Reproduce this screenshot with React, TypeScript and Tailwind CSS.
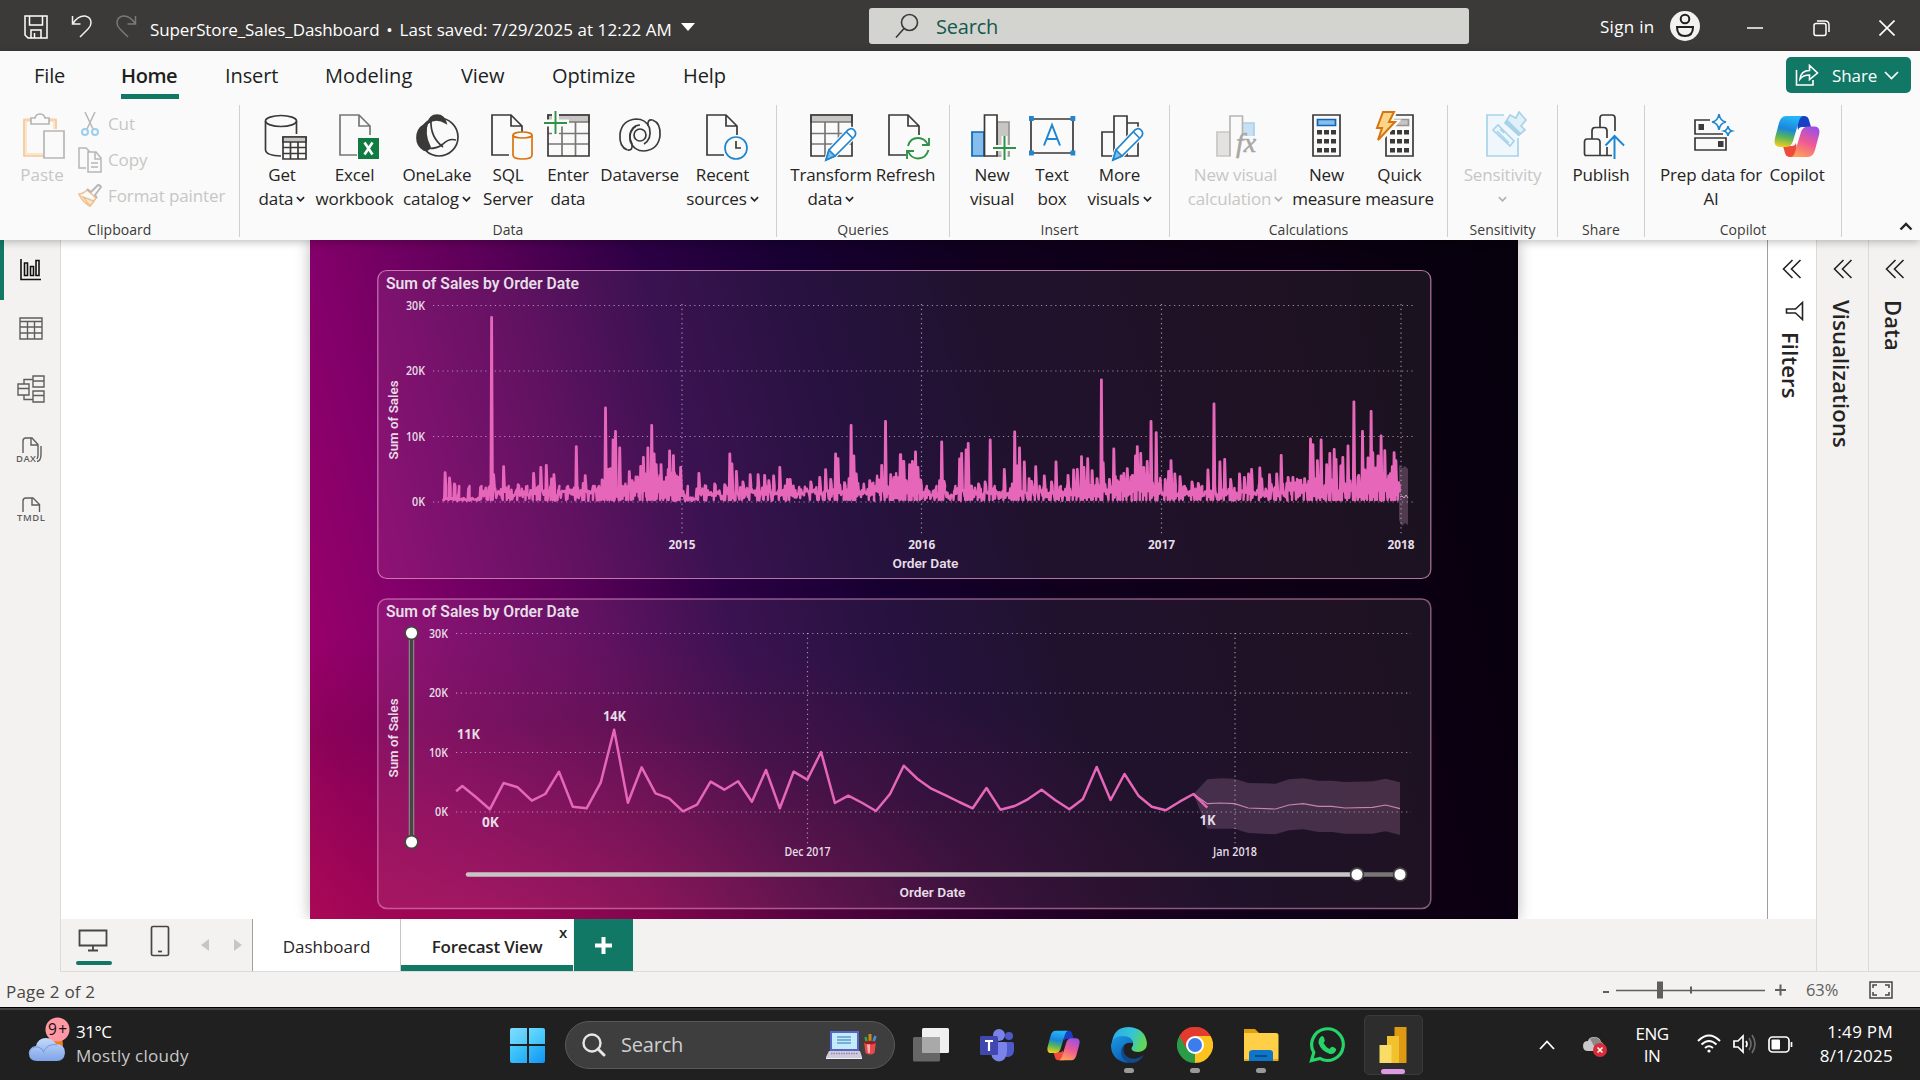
import React from "react";

type Pt = [number, number];

const INK = "#3b3a39";
const BLUE = "#1f86d0";

/* ---------- shared bits ---------- */

function Chevron({ color = "#252423", w = 9, className = "ml-[4px]" }: { color?: string; w?: number; className?: string }) {
  return (
    <svg width={w} height={w * 0.7} viewBox="0 0 10 7" fill="none" stroke={color} strokeWidth="1.8" className={"inline-block " + className}>
      <path d="M1 1.2 5 5.4 9 1.2" />
    </svg>
  );
}

function Icon({ children, className = "" }: { children: React.ReactNode; className?: string }) {
  return (
    <svg width="50" height="52" viewBox="0 0 50 52" fill="none" stroke={INK} strokeWidth="1.7" className={"shrink-0 " + className}>
      {children}
    </svg>
  );
}

function Doc({ x = 8 }: { x?: number }) {
  return <path transform={`translate(${x} 4)`} d="M18 41H1V1H20L31 12V21M20 1V12H31" />;
}

function Pencil() {
  return (
    <g stroke={BLUE}>
      <path d="M19 50 22 40 41 20Q45 17 47.500 20.500Q50 24 47 27L28 46Z" fill="#fff" stroke="#fafafa" strokeWidth="4" />
      <path d="M19 50 22 40 41 20Q45 17 47.500 20.500Q50 24 47 27L28 46Z" fill="#fff" />
      <path d="M19 50 22 40 28 46Z" fill="#83beec" />
      <path d="M39.500 22 45.500 28" />
    </g>
  );
}

function Grid({ head = "#c8c6c4" }: { head?: string }) {
  return (
    <g>
      <path d="M4 5H45V12H4Z" fill={head} stroke="#797775" />
      <path d="M4 23.500H45M4 34H45M18 12V46M31.500 12V46" stroke="#797775" />
      <path d="M4 5H45V46H4Z" />
    </g>
  );
}

function Calculator({ screen, edge }: { screen: string; edge: string }) {
  return (
    <g>
      <path d="M11 5H38V46H11Z" />
      <path d="M15.500 9.500H33.500V15.500H15.500Z" fill={screen} stroke={edge} />
      {[20, 29, 38].map((y) => [15, 22, 29].map((x) => <rect key={`${x}-${y}`} x={x} y={y} width="5" height="4.500" fill={INK} stroke="none" />))}
    </g>
  );
}

function CopilotMark({ id, w, h }: { id: string; w: number; h: number }) {
  return (
    <svg width={w} height={h} viewBox="0 0 46 41" className="shrink-0">
      <defs>
        <linearGradient id={id + "a"} x1="0.400" y1="0" x2="0.200" y2="1">
          <stop offset="0" stopColor="#25b4f5" />
          <stop offset="0.400" stopColor="#1a86dc" />
          <stop offset="0.650" stopColor="#53b35c" />
          <stop offset="1" stopColor="#f6cf1b" />
        </linearGradient>
        <linearGradient id={id + "b"} x1="0.700" y1="0" x2="0.300" y2="1">
          <stop offset="0" stopColor="#9c50e8" />
          <stop offset="0.500" stopColor="#ee5a92" />
          <stop offset="1" stopColor="#ffa05a" />
        </linearGradient>
      </defs>
      <path d="M22 0H30Q34 0 35 4L37 11H28Q25 11 24 14Z" fill="#1741c4" />
      <path d="M24 41H16Q12 41 11 37L9 30H18Q21 30 22 27Z" fill="#f04a3a" />
      <path d="M12 0H29Q26 1 25 5L19 25Q17 31 12 31H6Q-1 31 1 22L5 7Q7 0 12 0Z" fill={`url(#${id}a)`} />
      <path d="M34 41H17Q20 40 21 36L27 16Q29 10.500 34 10.500H40Q47 10.500 45 19L41 34Q39 41 34 41Z" fill={`url(#${id}b)`} />
    </svg>
  );
}

/* ---------- title bar ---------- */

function TitleBar() {
  return (
    <header className="flex h-[51px] shrink-0 items-center bg-[#3b3a38] text-white">
      <div className="flex w-[869px] items-center">
        <svg width="24" height="24" viewBox="0 0 24 24" fill="none" stroke="#fff" strokeWidth="1.500" className="ml-[24px] mt-[2px]">
          <path d="M1 1H23V23H4L1 20ZM5.500 1V10H18.500V1M7 23V15H17V23M10.500 18V23" />
        </svg>
        <svg width="22" height="24" viewBox="0 0 22 24" fill="none" stroke="#f3f2f1" strokeWidth="1.500" className="ml-[23px]">
          <path d="M1.500 2V10H9.500M2 9.500Q7 1.500 14 2Q20 3 20 9Q20 12 17 15L9 23" />
        </svg>
        <svg width="22" height="24" viewBox="0 0 22 24" fill="none" stroke="#7b7977" strokeWidth="1.500" className="ml-[22px]">
          <path d="M20.500 2V10H12.500M20 9.500Q15 1.500 8 2Q2 3 2 9Q2 12 5 15L13 23" />
        </svg>
        <div className="ml-[13px] mt-[8px] flex whitespace-nowrap text-[17px] leading-[24px]">
          <span className="tracking-[-0.1px]">SuperStore_Sales_Dashboard</span>
          <span className="w-[20px] text-center">•</span>
          <span className="tracking-[0.06px]">Last saved: 7/29/2025 at 12:22 AM</span>
        </div>
        <svg width="14" height="8" viewBox="0 0 14 8" className="ml-[9px] mt-[3px]"><path d="M0 0H14L7 8Z" fill="#fff" /></svg>
      </div>
      <div className="flex h-[36px] w-[600px] items-center rounded-[3px] bg-[#d3d3d0]">
        <svg width="24" height="26" viewBox="0 0 24 26" fill="none" stroke="#3b3a39" strokeWidth="1.600" className="ml-[26px]">
          <circle cx="14.500" cy="9.500" r="8" /><path d="M9 15.500 1 24.500" />
        </svg>
        <span className="ml-[17px] mt-[2px] text-[20px] tracking-[-0.2px] text-[#14594c]">Search</span>
      </div>
      <span className="ml-[131px] mt-[2px] text-[17px] tracking-[0.3px]">Sign in</span>
      <svg width="30" height="30" viewBox="0 0 30 30" className="ml-[15px]" fill="none" stroke="#201f1e" strokeWidth="2">
        <circle cx="15" cy="15" r="15" fill="#f3f2f1" stroke="none" />
        <circle cx="15" cy="8" r="4.300" /><path d="M7 16H23Q23 25 15 25Q7 25 7 16Z" />
      </svg>
      <svg width="16" height="16" viewBox="0 0 16 16" className="ml-[47px] mt-1" stroke="#fff" strokeWidth="1.500"><path d="M0 8H16" /></svg>
      <svg width="17" height="17" viewBox="0 0 17 17" className="ml-[50px] mt-[5px]" fill="none" stroke="#fff" strokeWidth="1.500">
        <rect x="1" y="3.500" width="12" height="12" rx="2" /><path d="M4 1H12Q16 1 16 5V12" />
      </svg>
      <svg width="16" height="16" viewBox="0 0 16 16" className="ml-[49px] mt-1" stroke="#fff" strokeWidth="1.600"><path d="M0.500 0.500 15.500 15.500M15.500 0.500 0.500 15.500" /></svg>
    </header>
  );
}

/* ---------- ribbon ---------- */

function MenuBar() {
  return (
    <nav className="flex h-[48px] items-center text-[20px] tracking-[-0.1px] text-[#201f1e]">
      <span className="ml-[34px] mt-[2px] w-[87px]">File</span>
      <span className="relative mt-[2px] w-[104px] font-semibold tracking-[-0.4px]">
        Home
        <i className="absolute -bottom-[8px] left-0 h-[5px] w-[58px] bg-[#117865]" />
      </span>
      <span className="mt-[2px] w-[100px]">Insert</span>
      <span className="mt-[2px] w-[136px] tracking-[0.08px]">Modeling</span>
      <span className="mt-[2px] w-[91px]">View</span>
      <span className="mt-[2px] w-[131px]">Optimize</span>
      <span className="mt-[2px]">Help</span>
      <div className="ml-auto mr-[9px] flex h-[36px] w-[125px] items-center rounded-[5px] bg-[#117865] text-white">
        <svg width="24" height="22" viewBox="0 0 24 22" fill="none" stroke="#fff" strokeWidth="1.600" className="ml-[9px]">
          <path d="M1.500 6V21H18V16M5 15Q6 6.500 14.500 6.500V1.500L22.500 9 14.500 15.500V11Q8 11 5 15Z" />
        </svg>
        <span className="ml-[13px] mt-px text-[17px]">Share</span>
        <svg width="15" height="9" viewBox="0 0 15 9" fill="none" stroke="#fff" strokeWidth="1.700" className="ml-[7px]"><path d="M1 1 7.500 7.500 14 1" /></svg>
      </div>
    </nav>
  );
}

function Group({ label, width, children }: { label: string; width: string; children: React.ReactNode }) {
  return (
    <section className={"flex h-[132px] shrink-0 flex-col border-r border-[#d2d0ce] " + width}>
      <div className="flex h-[114px] shrink-0">{children}</div>
      <div className="-mt-[1px] text-center text-[14px] leading-[24px] tracking-[0.05px] text-[#3b3a39]">{label}</div>
    </section>
  );
}

function Tool({ width, icon, lines, menu, off }: { width: string; icon: React.ReactNode; lines: string[]; menu?: boolean; off?: boolean }) {
  return (
    <div className={"flex shrink-0 flex-col items-center pt-[5px] " + width + (off ? " text-[#c8c6c4]" : " text-[#252423]")}>
      {icon}
      <div className="mt-[1px] flex flex-col items-center whitespace-nowrap text-[17px] leading-[24px] tracking-[-0.15px]">
        {lines.map((l, i) => (
          <span key={i} className="flex items-center">
            {l}
            {menu && i === lines.length - 1 ? <Chevron color={off ? "#b3b0ad" : "#252423"} className="ml-[3px]" /> : null}
          </span>
        ))}
      </div>
    </div>
  );
}

function Ribbon() {
  return (
    <div className="flex pt-[6px]">
      <Group label="Clipboard" width="w-[240px]">
        <div className="flex w-[78px] flex-col items-center pl-[6px] pt-[5px] text-[17px] text-[#c8c6c4]">
          <Icon className="ml-[4px]">
            <path d="M12 10H6V45H25M30 10H36V19" stroke="#fbe6cc" strokeWidth="4" />
            <path d="M12 10H5V46H25M30 10H37V19" stroke="#eec08e" strokeWidth="1.200" />
            <path d="M12 14V8H16Q17 4 21 4Q25 4 26 8H30V14Z" stroke="#b8b6b4" fill="#fafafa" />
            <path d="M25 21H45V48H25Z" stroke="#b8b6b4" fill="#fafafa" />
          </Icon>
          <span className="mt-[1px] leading-[24px]">Paste</span>
        </div>
        <div className="flex flex-col text-[17px] tracking-[-0.1px] text-[#c8c6c4]">
          <div className="mt-[1px] flex h-[36px] items-center">
            <svg width="24" height="26" viewBox="0 0 24 26" fill="none" strokeWidth="1.500">
              <path d="M7 1 15 18M17 1 9 18" stroke="#b8b6b4" />
              <circle cx="7" cy="21" r="3" stroke="#9fcdec" strokeWidth="2" /><circle cx="17" cy="21" r="3" stroke="#9fcdec" strokeWidth="2" />
            </svg>
            <span className="ml-[6px]">Cut</span>
          </div>
          <div className="flex h-[36px] items-center">
            <svg width="24" height="26" viewBox="0 0 24 26" fill="none" stroke="#b8b6b4" strokeWidth="1.500">
              <path d="M8 21H1V1H8L12 5M10 5H18L23 11V25H10ZM17 5V12H23M13 16H20M13 20H20" />
            </svg>
            <span className="ml-[6px]">Copy</span>
          </div>
          <div className="flex h-[36px] items-center">
            <svg width="24" height="26" viewBox="0 0 24 26" fill="none" strokeWidth="1.500">
              <path d="M9 7 18 15 12 23Q5 20 1 11Q5 11 9 7Z" stroke="#eec08e" />
              <path d="M5 14 16 18 12 23Z" stroke="#eec08e" fill="#fbe6cc" />
              <path d="M9 6 13 9 20 2Q22 2 23 4L17 12 19 15" stroke="#b8b6b4" strokeWidth="1.800" />
            </svg>
            <span className="ml-[6px]">Format painter</span>
          </div>
        </div>
      </Group>

      <Group label="Data" width="w-[537px] [&>div:first-child]:pl-[6px]">
        <Tool width="w-[72px]" lines={["Get", "data"]} menu icon={
          <Icon>
            <ellipse cx="24" cy="11" rx="15.500" ry="5.500" /><path d="M8.500 11V40Q9 45.500 24 46M39.500 11V24" />
            <path d="M26 27H49V49H26Z" fill="#fafafa" /><path d="M26 27H49V32H26Z" fill="#c8c6c4" /><path d="M26 37.500H49M26 43.500H49M33.500 32V49M41 32V49" />
          </Icon>} />
        <Tool width="w-[73px]" lines={["Excel", "workbook"]} icon={
          <Icon>
            <g stroke="#797775"><Doc x={9} /></g>
            <rect x="28" y="28" width="21" height="21" fill="#107c41" stroke="none" /><path d="M34.500 32.500 42.500 44.500M42.500 32.500 34.500 44.500" stroke="#fff" strokeWidth="2.600" />
          </Icon>} />
        <Tool width="w-[92px]" lines={["OneLake", "catalog"]} menu icon={
          <Icon>
            <circle cx="27" cy="27" r="19" />
            <path d="M16 13Q18 5 25 5Q32 5 34 13Q24 7 16 13Z" fill={INK} />
            <path d="M12 15Q5 19 5 28Q5 36 12 40Q16 41 18 37Q11 24 16 11Z" fill={INK} />
            <path d="M19 10Q18 27 31 37M11 38Q24 40 31 34Q37 28 44 30" />
          </Icon>} />
        <Tool width="w-[50px]" lines={["SQL", "Server"]} icon={
          <Icon className="ml-[2px]">
            <Doc x={7} />
            <g stroke="#d9730d"><path d="M29 25V45Q29 49 38.500 49Q48 49 48 45V25" fill="#fafafa" /><ellipse cx="38.500" cy="25" rx="9.500" ry="3" fill="#fafafa" /></g>
          </Icon>} />
        <Tool width="w-[70px]" lines={["Enter", "data"]} icon={
          <Icon className="ml-[2px]"><Grid /><path d="M0 13H25M11.500 0V25" stroke="#fafafa" strokeWidth="7" /><path d="M0 13H23M11.500 1V24" stroke="#2f9347" strokeWidth="1.900" /></Icon>} />
        <Tool width="w-[73px]" lines={["Dataverse"]} icon={
          <Icon>
            <path d="M12.500 40Q4 37 5 24Q7 10 21 9Q31 9 34.500 18Q37 29 29 34" />
            <path d="M12.500 40Q18 41 17 34Q12 25 18 18Q21 15 25 15" />
            <g transform="rotate(180 25 25)">
              <path d="M12.500 40Q4 37 5 24Q7 10 21 9Q31 9 34.500 18Q37 29 29 34" />
              <path d="M12.500 40Q18 41 17 34" />
            </g>
            <circle cx="25" cy="25" r="6" />
          </Icon>} />
        <Tool width="w-[93px]" lines={["Recent", "sources"]} menu icon={
          <Icon><Doc x={8} /><circle cx="38" cy="38" r="11" stroke={BLUE} fill="#fafafa" /><path d="M38 31V38H43" /></Icon>} />
      </Group>

      <Group label="Queries" width="w-[173px] [&>div:first-child]:pl-[10px]">
        <Tool width="w-[88px]" lines={["Transform", "data"]} menu icon={<Icon className="ml-[2px]"><Grid /><Pencil /></Icon>} />
        <Tool width="w-[61px]" lines={["Refresh"]} icon={
          <Icon><Doc x={7} /><circle cx="37" cy="38" r="13" fill="#fafafa" stroke="none" />
            <path d="M27 36Q29 28 37 28Q44 28 47 35M48 28V35H41M47.500 40Q45 48.500 37 48.500Q30 48.500 27 41M26 49V41H33" stroke="#2f9347" strokeWidth="1.900" />
          </Icon>} />
      </Group>

      <Group label="Insert" width="w-[220px] [&>div:first-child]:pl-[12px]">
        <Tool width="w-[60px]" lines={["New", "visual"]} icon={
          <Icon>
            <path d="M5 22H17V46H5Z" fill="#83beec" stroke="#1464b4" /><path d="M30 12H42V46H30Z" fill="#c8c6c4" stroke="#979593" />
            <path d="M17.500 5H30V46H17.500Z" fill="#fff" /><path d="M26 38H48M37.500 26V51" stroke="#fafafa" strokeWidth="6" /><path d="M26 38H49M37.500 26V50" stroke="#2f9347" strokeWidth="2" />
          </Icon>} />
        <Tool width="w-[60px]" lines={["Text", "box"]} icon={
          <Icon><path d="M4 9H46V43H4Z" /><path d="M17 35.500 25 15 33 35.500M19.500 29H30.500" stroke={BLUE} strokeWidth="2" />
            {[[2, 6], [43.500, 6], [2, 40.500], [43.500, 40.500]].map(([x, y]) => <rect key={`${x}${y}`} x={x} y={y} width="4.800" height="5" fill={BLUE} stroke="none" />)}
          </Icon>} />
        <Tool width="w-[75px]" lines={["More", "visuals"]} menu icon={
          <Icon className="-ml-[2px]"><path d="M8 22H20V46H8ZM20 6H33V46H20ZM33 13H44V46H33Z" /><Pencil /></Icon>} />
      </Group>

      <Group label="Calculations" width="w-[278px] [&>div:first-child]:pl-[11px]">
        <Tool width="w-[109px]" off lines={["New visual", "calculation"]} menu icon={
          <Icon>
            <path d="M6 22H19V46H6Z" fill="#e4e2e1" stroke="#c8c6c4" /><path d="M31 13H43V30H31Z" fill="#c7e0f4" stroke="#a9d0ec" />
            <path d="M19 46V6H31.500V46" fill="#fafafa" stroke="#b8b6b4" />
            <path d="M24 26H48V50H24Z" fill="#fafafa" stroke="none" />
            <text x="25" y="42" fontFamily="Liberation Serif" fontStyle="italic" fontSize="28" fill="#a8a6a4" stroke="#a8a6a4" strokeWidth="0.500">fx</text>
          </Icon>} />
        <Tool width="w-[73px]" lines={["New", "measure"]} icon={<Icon><Calculator screen="#83beec" edge="#1464b4" /></Icon>} />
        <Tool width="w-[73px]" lines={["Quick", "measure"]} icon={
          <Icon>
            <Calculator screen="#c8c6c4" edge="#979593" />
            <path d="M8 1H20L15 12H21L4 31 8 18H2Z" stroke="#fafafa" strokeWidth="5" /><path d="M8 2H19L14 12H20L3 30 7 18H2Z" fill="#fbd68a" stroke="#d9730d" strokeWidth="2" />
          </Icon>} />
      </Group>

      <Group label="Sensitivity" width="w-[110px]">
        <div className="flex w-[109px] flex-col items-center">
          <Tool width="w-[109px]" off lines={["Sensitivity"]} icon={
            <Icon>
              <g stroke="#a6d3ea"><path d="M26 5H9V46H40V28" fill="#f0f7fc" /><path d="M15 20 20 15 36 31 32 36Z" /><path d="M19 21 31 33M22 19 26 23" />
              <path d="M27 13 32 5 38 8 41 2 48 10 43 16 47 20 41 25Z" fill="#e2f0f8" /><path d="M28 11 42 25" strokeWidth="4" /></g>
            </Icon>} />
          <Chevron color="#b3b0ad" className="mt-[9px]" />
        </div>
      </Group>
      <Group label="Share" width="w-[87px]">
        <Tool width="w-[86px]" lines={["Publish"]} icon={
          <Icon>
            <path d="M17 45.500H10Q8.500 45.500 8.500 43V32Q8.500 29 11 29H21Q24 29 24 32V45.500H16M16 29V21Q16 17.500 19 17.500H28Q31 17.500 31 21V28M24 17V8Q24 5 27 5H36Q39 5 39 8V21M24 45.500H36M31 37V45" />
            <path d="M38.500 49V26M29.500 35.500 38.500 26 48 35.500" stroke={BLUE} strokeWidth="2" />
          </Icon>} />
      </Group>
      <Group label="Copilot" width="w-[197px] [&>div:first-child]:pl-[14px]">
        <Tool width="w-[104px]" lines={["Prep data for", "AI"]} icon={
          <Icon>
            <path d="M24 10H9V24H37M9 28H40V40H9Z" strokeWidth="1.700" /><path d="M12.500 14H18V20H12.500ZM32 31H37.500V37H32Z" fill={INK} stroke="none" />
            <path d="M33 4Q34 11 40 12Q34 13 33 20Q32 13 26 12Q32 11 33 4ZM42 16Q42.500 20 46 21Q42.500 22 42 26Q41.500 22 38 21Q41.500 20 42 16Z" stroke={BLUE} />
          </Icon>} />
        <Tool width="w-[68px]" lines={["Copilot"]} icon={<div className="flex h-[52px] items-center"><CopilotMark id="rb" w={46} h={41} /></div>} />
      </Group>
      <svg width="14" height="9" viewBox="0 0 14 9" fill="none" stroke="#252423" strokeWidth="2.400" className="ml-auto mr-[7px] mt-[117px]"><path d="M1.500 7.500 7 2 12.500 7.500" /></svg>
    </div>
  );
}

/* ---------- left rail ---------- */

function Rail() {
  const s = { fill: "none", stroke: "#605e5c", strokeWidth: 1.4 } as const;
  return (
    <aside className="flex w-[61px] shrink-0 flex-col border-r border-[#dddbd9] bg-[#f3f2f1]">
      <div className="flex h-[60px] items-center border-l-4 border-[#117865] pl-[16px]">
        <svg width="22" height="22" viewBox="0 0 22 22" fill="none" stroke="#111" strokeWidth="1.600"><path d="M1 0V20.500H21M4.500 4H7.500V16.500H4.500ZM10.500 7.500H13.500V16.500H10.500ZM16 1.500H19V16.500H16Z" /></svg>
      </div>
      <div className="flex h-[57px] items-center pl-[19px]">
        <svg width="24" height="23" viewBox="0 0 24 23" {...s}><path d="M1 1H23V22H1ZM1 4.500H23M1 10H23M1 16H23M8.500 4.500V22M15.500 4.500V22" /></svg>
      </div>
      <div className="flex h-[63px] items-center pl-[17px]">
        <svg width="28" height="28" viewBox="0 0 28 28" {...s}><path d="M16 1H27V12H16ZM16 6H27M16 16H27V27H16ZM16 20.500H27M1 9H12V20H1ZM1 13.500H12M7 9V4.500H16M7 20V24.500H16" /></svg>
      </div>
      <div className="flex h-[60px] items-center pl-[15px]">
        <svg width="30" height="30" viewBox="0 -2 30 30" {...s}>
          <path d="M8 16V4Q8 1 11 1H17L23 7.500V18Q23 20 22 22M16 1V8H23M26 9V17Q26 24 22 24.500" />
          <text x="1" y="24.500" fontFamily="Open Sans" fontSize="9.500" fontWeight="600" fill="#605e5c" stroke="none" textLength="20">DAX</text>
        </svg>
      </div>
      <div className="flex h-[60px] items-center pl-[16px]">
        <svg width="31" height="30" viewBox="0 -2 31 30" {...s}>
          <path d="M7 15V4Q7 1 10 1H17L23.500 7.500V15M16 1V8H23" />
          <text x="1" y="24" fontFamily="Open Sans" fontSize="9.500" fontWeight="600" fill="#605e5c" stroke="none" textLength="28">TMDL</text>
        </svg>
      </div>
    </aside>
  );
}

/* ---------- charts ---------- */

/* local maxima of the daily series: x at K units per pixel, y in thirds of a pixel */
const PEAKS_A: Pt[] = [[218,636],[231,652],[245,670],[256,702],[286,684],[321,680],[345,682],[353,170],[359,642],[388,618],[400,685],[430,672],[454,678],[475,638],[487,680],[496,620],[512,614],[527,655],[534,642],[547,690],[572,680],[599,558],[619,668],[625,645],[650,686],[662,682],[674,658],[684,442],[692,626],[698,624],[706,538],[713,512],[725,562],[746,682],[753,633],[761,660],[786,617],[794,590],[807,562],[818,494],[825,580],[831,612],[845,612],[854,664],[866,626],[870,571],[881,585],[896,650],[902,620],[920,702],[955,638],[973,675],[1001,670],[1030,672],[1045,580],[1051,610],[1064,632],[1083,664],[1104,642],[1127,642],[1146,644],[1158,660],[1172,646],[1190,620],[1212,656],[1220,656],[1280,664],[1306,650],[1323,627],[1338,656],[1352,580],[1359,594],[1378,666],[1391,654],[1397,494],[1405,586],[1412,640],[1451,660],[1466,680],[1486,614],[1497,482],[1512,642],[1522,650],[1540,582],[1549,602]];
const PEAKS_B: Pt[] = [[2,582],[11,602],[18,660],[28,612],[36,602],[45,574],[52,620],[60,658],[75,686],[103,688],[115,660],[121,544],[128,662],[158,692],[173,595],[179,578],[192,568],[198,548],[206,676],[228,670],[247,664],[262,538],[272,684],[303,626],[326,670],[333,514],[340,616],[347,562],[361,604],[375,654],[382,662],[394,618],[419,646],[440,664],[453,604],[464,680],[488,644],[504,628],[515,626],[527,588],[534,620],[545,594],[558,630],[572,654],[585,358],[590,606],[608,656],[621,565],[634,664],[642,646],[650,638],[660,624],[675,644],[684,586],[689,558],[699,578],[708,620],[718,602],[729,482],[744,516],[770,656],[780,632],[787,600],[798,640],[813,648],[824,678],[848,664],[866,668],[875,682],[894,628],[912,430],[929,604],[943,596],[960,656],[986,640],[1000,650],[1012,640],[1021,626],[1045,622],[1073,642],[1094,640],[1107,584],[1127,650],[1141,650],[1175,654],[1192,535],[1199,552],[1212,600],[1223,538],[1239,612],[1248,578],[1261,566],[1266,596],[1280,616],[1286,590],[1301,556],[1318,424],[1332,644],[1343,512],[1350,628],[1359,592],[1368,452],[1373,576],[1382,622],[1388,586],[1397,526],[1408,570],[1419,646],[1435,576],[1440,600],[1448,666]];

const K = 2.904;
const peaks: Pt[] = [
  ...PEAKS_A.map(([x, y]): Pt => [60 + x / K, 20.5 + y / 3]),
  ...PEAKS_B.map(([x, y]): Pt => [590 + x / K, 20.5 + y / 3]),
];

function dailyPath() {
  let seed = 41;
  const rnd = () => {
    seed = (seed * 16807) % 2147483647;
    return seed / 2147483647;
  };
  const pts: Pt[] = [];
  let k = 0;
  let low = true;
  for (let x = 133; x < 1090; x += 0.95) {
    if (k < peaks.length && x >= peaks[k][0] - 0.5) {
      pts.push([peaks[k][0] - 0.9, 260]);
      pts.push([peaks[k][0] - 0.2, peaks[k][1]]);
      pts.push([peaks[k][0] + 0.2, peaks[k][1]]);
      pts.push([peaks[k][0] + 1, 246]);
      k++;
      low = true;
      continue;
    }
    const year = ((x - 132) % 240) / 240;
    const calm = x < 170 || (x > 374 && x < 386);
    const amp = calm ? 3.5 : 12 + 8 * year + (x > 930 ? 7 : 0) + (year > 0.8 ? 9 : 0);
    const v = low ? rnd() * (calm ? 2 : 11) : amp * (0.35 + 0.65 * rnd());
    pts.push([x, 261 - v]);
    low = !low;
  }
  return "M" + pts.map(([x, y]) => `${x.toFixed(1)} ${y.toFixed(1)}`).join("L");
}

const L1: Pt[] = [[250,604],[268,588],[308,622],[348,658],[388,579],[429,592],[470,632],[509,612],[549,545],[589,650],[629,655],[670,578],[709,419],[749,638],[789,532],[829,610],[869,625],[909,664],[950,644],[989,575],[1029,599],[1069,574],[1109,635],[1150,540],[1190,655],[1230,545],[1270,569],[1310,486],[1350,639],[1389,617],[1430,639],[1469,663],[1510,612]];
const L2: Pt[] = [[9,527],[43,567],[77,596],[112,616],[145,636],[178,655],[212,594],[246,659],[281,648],[313,628],[347,599],[380,630],[415,658],[448,627],[482,531],[516,630],[550,552],[584,617],[617,650],[651,661],[685,635],[719,612],[753,653]];
const BAND: Pt[] = [[719,612],[753,568],[785,565],[820,566],[853,579],[920,581],[953,568],[988,565],[1025,572],[1058,572],[1090,576],[1158,574],[1190,566],[1225,577],[1225,735],[1190,724],[1158,731],[1090,731],[1058,726],[1025,726],[988,718],[953,721],[920,733],[853,729],[820,716],[753,716]];
const MID: Pt[] = [[719,612],[753,641],[785,639],[820,641],[853,654],[920,657],[953,645],[988,641],[1025,649],[1058,649],[1090,654],[1158,652],[1190,645],[1225,656]];
const a = (p: Pt[]) => p.map(([x, y]) => `${(60 + x / K).toFixed(1)},${(y / 3).toFixed(1)}`).join(" ");
const b = (p: Pt[]) => p.map(([x, y]) => `${(590 + x / 2.45).toFixed(1)},${(y / 3).toFixed(1)}`).join(" ");

function Txt({ x, y, s, len, size = 13, bold, din, anchor = "start", rotate }: { x: number; y: number; s: string; len?: number; size?: number; bold?: boolean; din?: boolean; anchor?: "start" | "middle" | "end"; rotate?: boolean }) {
  return (
    <text x={x} y={y} fontSize={size} fontWeight={bold ? 700 : 600} fontFamily={din ? "Roboto" : "Open Sans"} fill="#e6dde6" textAnchor={anchor} textLength={len} lengthAdjust="spacingAndGlyphs" transform={rotate ? `rotate(-90 ${x} ${y})` : undefined}>
      {s}
    </text>
  );
}

const dots = { stroke: "#cfc3cf", strokeOpacity: 0.7, strokeWidth: 1.2, strokeDasharray: "1.2 3.55" } as const;

function YearChart() {
  return (
    <svg width="1208" height="350" viewBox="0 0 1208 350" className="block">
      <rect x="67.800" y="30.500" width="1053" height="308" rx="9" fill="#fff" fillOpacity="0.070" stroke="#e39acb" strokeOpacity="0.750" strokeWidth="1.200" />
      <Txt x={76} y={49} s="Sum of Sales by Order Date" len={193} size={16} din />
      {[65.5, 131, 196.5, 262].map((y) => <path key={y} d={`M123 ${y}H1105`} {...dots} />)}
      {[372, 611.5, 851.5, 1091].map((x) => <path key={x} d={`M${x} 64V296`} {...dots} />)}
      {["30K", "20K", "10K", "0K"].map((s, i) => <Txt key={s} x={115} y={69.5 + i * 65.500} s={s} size={12} len={s === "0K" ? 13 : 19} anchor="end" />)}
      {["2015", "2016", "2017", "2018"].map((s, i) => <Txt key={s} x={372 + i * 239.700} y={309} s={s} size={12} len={27} bold anchor="middle" />)}
      <Txt x={615.5} y={328} s="Order Date" len={66} size={13.5} din anchor="middle" />
      <Txt x={88} y={180} s="Sum of Sales" len={79} size={13.5} din rotate anchor="middle" />
      <path d="M1089 225 1092 228 1095 226 1098 229V285L1095 283 1092 286 1089 280Z" fill="#e8b4d8" fillOpacity="0.250" />
      <path d="M1090 257 1092 256 1094 258 1096 255 1098 258" stroke="#d8a0c4" fill="none" />
      <path d={dailyPath()} fill="none" stroke="#e667b9" strokeWidth="2.400" strokeLinejoin="round" />
    </svg>
  );
}

function ZoomChart() {
  return (
    <svg width="1208" height="329" viewBox="0 0 1208 329" className="block">
      <rect x="67.800" y="9" width="1053" height="309.500" rx="9" fill="#fff" fillOpacity="0.070" stroke="#e39acb" strokeOpacity="0.550" strokeWidth="1.500" />
      <Txt x={76} y={27} s="Sum of Sales by Order Date" len={193} size={16} din />
      {[43.5, 103.2, 162.5, 222].map((y) => <path key={y} d={`M146 ${y}H1101`} {...dots} />)}
      {[497.5, 925].map((x) => <path key={x} d={`M${x} 43V254`} {...dots} />)}
      {["30K", "20K", "10K", "0K"].map((s, i) => <Txt key={s} x={138} y={47.5 + i * 59.500} s={s} size={12} len={s === "0K" ? 13 : 19} anchor="end" />)}
      <Txt x={497.5} y={266} s="Dec 2017" len={46} size={12} anchor="middle" />
      <Txt x={925} y={266} s="Jan 2018" len={44} size={12} anchor="middle" />
      <Txt x={622.5} y={307} s="Order Date" len={66} size={13.500} din anchor="middle" />
      <Txt x={88} y={148} s="Sum of Sales" len={79} size={13.500} din rotate anchor="middle" />
      <polygon points={b(BAND)} fill="#e8a4d8" fillOpacity="0.200" />
      <polyline points={b(MID)} fill="none" stroke="#c784ae" strokeWidth="1.200" />
      <polyline points={a(L1) + " " + b(L2)} fill="none" stroke="#e667b9" strokeWidth="2.500" strokeLinejoin="round" />
      <Txt x={147} y={149} s="11K" len={23} size={14} bold />
      <Txt x={293} y={131} s="14K" len={23} size={14} bold />
      <Txt x={172} y={237} s="0K" len={17} size={14} bold />
      <Txt x={889.5} y={235} s="1K" len={16} size={14} bold />
      <path d="M101.500 43V252" stroke="#8d8a8a" strokeWidth="5.500" /><path d="M101.500 43V252" stroke="#484644" strokeWidth="3.200" />
      <path d="M158 284.500H1046" stroke="#c8c6c4" strokeWidth="4.500" strokeLinecap="round" />
      <path d="M1046 284.500H1090" stroke="#797775" strokeWidth="4.500" />
      {[[101.5, 43], [101.5, 252], [1047, 284.5], [1090, 284.5]].map(([x, y]) => <circle key={`${x}${y}`} cx={x} cy={y} r="6.400" fill="#fff" stroke="#484644" strokeWidth="1.700" />)}
    </svg>
  );
}

function Report() {
  return (
    <div className="ml-[249px] flex w-[1208px] shrink-0 flex-col bg-[radial-gradient(ellipse_760px_330px_at_16%_106%,rgba(185,12,72,0.6)_0%,rgba(150,8,60,0.42)_40%,rgba(90,4,40,0.25)_72%,rgba(60,0,25,0)_100%),linear-gradient(76deg,#b0086a_0%,#98006a_5%,#84006a_12%,#5a0058_25%,#2c0044_36%,#170032_47%,#10001e_60%,#0e0014_78%,#06000c_100%)] shadow-[0_0_14px_rgba(0,0,0,0.28)]">
      <YearChart />
      <ZoomChart />
    </div>
  );
}

/* ---------- side panes ---------- */

function Pane({ title, className, children }: { title: string; className: string; children?: React.ReactNode }) {
  return (
    <aside className={"flex shrink-0 flex-col items-center border-l pt-[19px] " + className}>
      <svg width="20" height="20" viewBox="0 0 20 20" fill="none" stroke="#252423" strokeWidth="1.600"><path d="M10.500 1 1.500 10 10.500 19M18.500 1 9.500 10 18.500 19" /></svg>
      {children}
      <span className="-ml-[2px] mt-[21px] text-[22px] font-semibold leading-[28px] tracking-[0.15px] text-[#252423] [writing-mode:vertical-rl]">{title}</span>
    </aside>
  );
}

/* ---------- page tabs and status ---------- */

function PageTabs() {
  return (
    <div className="flex h-[53px] shrink-0 border-b border-[#dddbd9] bg-[#f3f2f1] text-[17px] text-[#252423]">
      <div className="flex w-[192px] border-r border-[#a19f9d]">
        <div className="ml-[15px] flex w-[36px] flex-col items-center pt-[10px]">
          <svg width="30" height="24" viewBox="0 0 30 24" fill="none" stroke="#484644" strokeWidth="1.800" className="-ml-[2px]"><path d="M1.500 1.500H28.500V16.500H1.500ZM15 16.500V21M10 21.500H20" /></svg>
          <i className="mt-[8px] h-[4px] w-full rounded-full bg-[#117865]" />
        </div>
        <svg width="20" height="32" viewBox="0 0 20 32" fill="none" stroke="#484644" strokeWidth="1.700" className="ml-[38px] mt-[6px]"><rect x="1.500" y="1.500" width="17" height="29" rx="1.500" /><path d="M8 26.500H12" /></svg>
        <svg width="8" height="12" viewBox="0 0 8 12" className="ml-[31px] mt-[20px]"><path d="M8 0V12L0 6Z" fill="#c8c6c4" /></svg>
        <svg width="8" height="12" viewBox="0 0 8 12" className="ml-[25px] mt-[20px]"><path d="M0 0V12L8 6Z" fill="#c8c6c4" /></svg>
      </div>
      <div className="flex w-[148px] items-center justify-center border-r border-[#c8c6c4] bg-white pt-[3px]">Dashboard</div>
      <div className="relative flex w-[172px] items-center justify-center border-b-[6px] border-[#117865] bg-white pt-[9px] font-semibold tracking-[-0.2px]">
        Forecast View
        <span className="absolute right-[6px] top-[1px] text-[15px] leading-[24px]">x</span>
      </div>
      <div className="ml-[1px] flex w-[59px] items-center justify-center bg-[#117865]">
        <svg width="17" height="17" viewBox="0 0 17 17" stroke="#fff" strokeWidth="4"><path d="M0 8.500H17M8.500 0V17" /></svg>
      </div>
    </div>
  );
}

function StatusBar() {
  return (
    <footer className="flex h-[35px] shrink-0 items-center bg-[#f3f2f1] text-[17px] text-[#484644]">
      <span className="ml-[6px] mt-[4px] tracking-[0.2px]">Page 2 of 2</span>
      <svg width="192" height="20" viewBox="0 0 192 20" stroke="#605e5c" className="ml-auto">
        <path d="M1 12H7" strokeWidth="2" /><path d="M14 10.500H163" strokeWidth="1.500" /><path d="M58 1.500V18.500" strokeWidth="6" /><path d="M89 6.500V13.500" strokeWidth="2" /><path d="M173 10H184M178.500 4.500V15.500" strokeWidth="2" />
      </svg>
      <span className="ml-[12px] mt-[2px] w-[36px] text-[16.500px] tracking-[-0.1px] text-[#605e5c]">63%</span>
      <svg width="24" height="18" viewBox="0 0 24 18" fill="none" stroke="#484644" strokeWidth="1.500" className="ml-[27px] mr-[27px]"><path d="M1 1H23V17H1ZM4 7V4H8M16 4H20V7M20 11V14H16M8 14H4V11" /></svg>
    </footer>
  );
}

/* ---------- taskbar ---------- */

function Slot({ children, run, className = "" }: { children: React.ReactNode; run?: boolean; className?: string }) {
  return (
    <div className={"relative flex h-full w-[66px] shrink-0 items-center justify-center " + className}>
      {children}
      {run ? <i className="absolute bottom-[7px] h-[5px] w-[10px] rounded-full bg-[#9a9a9a]" /> : null}
    </div>
  );
}

function Taskbar() {
  return (
    <div className="flex h-[72px] shrink-0 items-center border-t-2 border-[#434343] bg-[#202020] text-white shadow-[0_-1px_0_#000]">
      <div className="flex w-[510px] items-center">
        <svg width="42" height="46" viewBox="0 0 42 46" className="ml-[28px] -mt-[10px]">
          <defs><linearGradient id="cl" x1="0" y1="0" x2="0" y2="1"><stop offset="0" stopColor="#c4dafb" /><stop offset="1" stopColor="#7fa3e8" /></linearGradient></defs>
          <circle cx="27" cy="27" r="8" fill="#f07a1a" />
          <path d="M9 44Q1 44 1 36.500Q1 30 8 29Q10 21 18 21Q25 21 28 27Q37 27 37 36Q36 44 29 44Z" fill="url(#cl)" />
          <path d="M1 36Q3 29 10 30Q15 31 16 36M16 34Q20 26 29 28" stroke="#7598dc" fill="none" />
          <circle cx="29.500" cy="12.500" r="12" fill="#ff99a4" />
          <text x="29.500" y="18" fontFamily="Open Sans" fontSize="15.500" fill="#201018" textAnchor="middle" textLength="19">9+</text>
        </svg>
        <div className="-mt-[2px] ml-[6px] text-[17px] leading-[24px] tracking-[0.3px]">
          <div className="tracking-[-0.5px]">31°C</div>
          <div className="text-[#c8c8c8]">Mostly cloudy</div>
        </div>
      </div>
      <div className="grid grid-cols-2 gap-[2px] overflow-hidden rounded-[2px]">
        <i className="size-[16.500px] bg-gradient-to-br from-[#7fdcff] to-[#4cc8fa]" /><i className="size-[16.500px] bg-gradient-to-br from-[#66dcff] to-[#37bdf8]" />
        <i className="size-[16.500px] bg-gradient-to-br from-[#48cdfc] to-[#22a9f5]" /><i className="size-[16.500px] bg-gradient-to-br from-[#37bdfa] to-[#0c94f4]" />
      </div>
      <div className="ml-[20px] flex h-[48px] w-[330px] items-center rounded-full border border-[#595959] bg-[#3e3e3e]">
        <svg width="24" height="24" viewBox="0 0 24 24" fill="none" stroke="#e6e6e6" strokeWidth="2.400" className="ml-[16px]"><circle cx="10" cy="10" r="8.500" /><path d="M16 16 22 22" strokeWidth="3" strokeLinecap="round" /></svg>
        <span className="ml-[15px] text-[20px] tracking-[-0.2px] text-[#cfcfcf]">Search</span>
        <svg width="52" height="30" viewBox="0 0 52 30" className="ml-auto mr-[16px]">
          <path d="M4 1H33V21H4Z" fill="#5566c4" /><path d="M6 3H31V19H6Z" fill="#c5ebfb" /><path d="M11 7H25M11 10H25M11 13H25" stroke="#5a9fc8" strokeWidth="1.300" />
          <path d="M3 21H34L36 27V29H0V27Z" fill="#cfcbdc" /><path d="M5 23.500H32" stroke="#918ba6" strokeWidth="1.500" strokeDasharray="1.500 1" /><path d="M0 28.500H36" stroke="#f4f4f8" />
          <path d="M44 14V4" stroke="#c98a1c" strokeWidth="3" /><path d="M41 13 39.500 7" stroke="#3aa648" strokeWidth="2.500" /><path d="M47 13 49.500 6" stroke="#4a90d6" strokeWidth="2.500" />
          <path d="M38 12H50L48.500 23Q44 26 39.500 23Z" fill="#e84a4a" /><path d="M41 14H44V23H42Z" fill="#ffb3ad" /><ellipse cx="44" cy="12.500" rx="6" ry="1.800" fill="#8e1f24" />
        </svg>
      </div>
      <Slot className="ml-[3px]">
        <svg width="36" height="34" viewBox="0 0 36 34"><rect x="9" y="0" width="27" height="25" rx="1.500" fill="#f0f0f0" /><rect x="0" y="9" width="27" height="24.500" rx="1.500" fill="#6d6d6d" fillOpacity="0.920" /><rect x="9" y="9" width="18" height="16" fill="#a9a9a9" /></svg>
      </Slot>
      <Slot>
        <svg width="36" height="33" viewBox="0 0 36 33">
          <circle cx="30" cy="7" r="4" fill="#5059c9" /><path d="M23 13H33Q35 13 35 15V22Q34 28 28 28L23 27Z" fill="#5059c9" />
          <circle cx="20" cy="6" r="6" fill="#7b83eb" /><path d="M12 13H26Q28 13 28 15V23Q27 32 20 32.500Q13 32 12 24Z" fill="#7b83eb" />
          <rect x="1" y="7" width="18" height="19" rx="1.500" fill="#4048b0" /><path d="M6 12H14M10 12V22" stroke="#fff" strokeWidth="2.200" />
        </svg>
      </Slot>
      <Slot><CopilotMark id="tb" w={33} h={31} /></Slot>
      <Slot run>
        <svg width="36" height="36" viewBox="0 0 36 36">
          <defs>
            <linearGradient id="e1" x1="0" y1="0" x2="1" y2="0.300"><stop offset="0" stopColor="#2aa8e8" /><stop offset="0.600" stopColor="#34c4d8" /><stop offset="1" stopColor="#5fd65a" /></linearGradient>
            <linearGradient id="e2" x1="0" y1="0" x2="0.600" y2="1"><stop offset="0" stopColor="#1a9be6" /><stop offset="1" stopColor="#0b5cb0" /></linearGradient>
          </defs>
          <path d="M1 15Q3 0 18 0Q34 1 36 16Q36 24 28 25Q20 25 20.500 21Q23 18 22 15Q17 8 1 15Z" fill="url(#e1)" />
          <path d="M0 18Q1 9 12 9Q21 9 22 16Q12 14 12 23Q13 32 24 33Q18 37 12 35Q0 31 0 18Z" fill="url(#e2)" />
          <path d="M14 17Q10 24 15 29Q22 35 33 28Q29 35 21 36Q11 35 10 26Q10 20 14 17Z" fill="#114a8b" />
        </svg>
      </Slot>
      <Slot run>
        <svg width="36" height="36" viewBox="0 0 36 36">
          <path d="M18 18 2.410 9A18 18 0 0 1 33.590 9Z" fill="#e33b2e" /><path d="M18 18 33.590 9A18 18 0 0 1 18 36Z" fill="#fcc31e" /><path d="M18 18 18 36A18 18 0 0 1 2.410 9Z" fill="#2a9b47" />
          <path d="M18 9H33.590L26 22 18 36 25.800 22.500Z" fill="#fcc31e" /><path d="M2.410 9 10.200 22.500 18 18 18 9H33.590A18 18 0 0 0 2.410 9Z" fill="#e33b2e" />
          <circle cx="18" cy="18" r="9" fill="#fff" /><circle cx="18" cy="18" r="7" fill="#3b7ded" />
        </svg>
      </Slot>
      <Slot run>
        <svg width="36" height="34" viewBox="0 0 36 34"><path d="M1 1H12L16 5V12H1Z" fill="#e0a00c" /><path d="M1 5H33Q35.500 5 35.500 7V31H1Z" fill="#ffcf48" /><path d="M1 31H35.500V33H1Z" fill="#e8a81b" /><path d="M6 33V25Q6 22 10 22H26Q30 22 30 25V33Z" fill="#0e76c8" /><path d="M12 28H24" stroke="#084a88" strokeWidth="1.800" /></svg>
      </Slot>
      <Slot>
        <svg width="36" height="36" viewBox="0 0 36 36" fill="none"><path d="M2.500 33.500 4.800 25.500A15.800 15.800 0 1 1 10.800 31.400Z" stroke="#25d366" strokeWidth="3.200" /><path d="M12 9.500Q14.500 8 15.500 12Q16.500 14 14.500 16Q17 20.500 20.500 22Q22.500 19 24 20Q28 21.500 27 23.500Q25 27.500 21 27Q12 24 9.500 16Q9.500 11.500 12 9.500Z" fill="#25d366" /></svg>
      </Slot>
      <Slot>
        <div className="relative flex h-[60px] w-[59px] items-center justify-center rounded-[5px] border border-[#3a3a3a] bg-[#2d2d2d]">
          <svg width="28" height="36" viewBox="0 0 28 36"><path d="M15.500 0H27.500V36H15.500Z" fill="#dd9a12" /><path d="M8 9H20V36H8Z" fill="#f2c22e" /><path d="M0.500 18H12.500V36H0.500Z" fill="#f9dc66" /></svg>
          <i className="absolute bottom-0 h-[5px] w-[24px] rounded-full bg-[#dd9be4]" />
        </div>
      </Slot>
      <svg width="16" height="10" viewBox="0 0 16 10" fill="none" stroke="#fff" strokeWidth="1.800" className="ml-[113px]"><path d="M1 9 8 1.500 15 9" /></svg>
      <svg width="26" height="22" viewBox="0 0 26 22" className="ml-[27px] mt-[3px]"><path d="M6 15Q1 15 1 10Q1 5 6 5Q7 1 12 1Q18 1 19 6Q23 7 22 15Z" fill="#c9c9c9" /><path d="M8 3Q15 -1 19 6L21 10H12Z" fill="#8a8a8a" /><circle cx="18" cy="14" r="7" fill="#d92c38" /><path d="M15.500 11.500 20.500 16.500M20.500 11.500 15.500 16.500" stroke="#fff" strokeWidth="1.600" /></svg>
      <div className="ml-[16px] w-[56px] text-center text-[17px] leading-[22px] tracking-[-0.5px]">ENG<br />IN</div>
      <svg width="24" height="20" viewBox="0 0 24 20" fill="none" stroke="#fff" strokeWidth="2" className="-mt-[2px] ml-[17px]"><path d="M1 7Q12 -4 23 7M4.500 10.500Q12 3.500 19.500 10.500M8 14Q12 10.500 16 14" /><circle cx="12" cy="17" r="1.600" fill="#fff" stroke="none" /></svg>
      <svg width="24" height="22" viewBox="0 0 24 22" fill="none" stroke="#fff" strokeWidth="1.700" className="-mt-[2px] ml-[12px]"><path d="M1 8H5L10 3V19L5 14H1ZM13 8Q15 11 13 14" /><path d="M16 5Q20 11 16 17M19 2Q25 11 19 20" stroke="#6a6a6a" /></svg>
      <svg width="25" height="17" viewBox="0 0 25 17" fill="none" stroke="#fff" strokeWidth="1.700" className="-mt-[2px] ml-[11px]"><rect x="1" y="1" width="20" height="15" rx="3.500" /><rect x="3.500" y="3.500" width="8.500" height="10" rx="1" fill="#fff" stroke="none" /><path d="M23.500 6V11" /></svg>
      <div className="-mt-[3px] ml-auto mr-[27px] text-right text-[17px] leading-[24px] tracking-[0.3px]">1:49 PM<br />8/1/2025</div>
    </div>
  );
}

export default function App() {
  return (
    <div className="flex h-[1080px] w-[1920px] flex-col overflow-hidden bg-[#f3f2f1] font-['Open_Sans',sans-serif]">
      <TitleBar />
      <div className="z-10 h-[189px] shrink-0 bg-[#fafafa] shadow-[0_2px_8px_rgba(0,0,0,0.25)]">
        <MenuBar />
        <Ribbon />
      </div>
      <div className="flex h-[732px] shrink-0">
        <Rail />
        <div className="flex w-[1755px] shrink-0 flex-col">
          <div className="flex h-[679px] shrink-0 overflow-hidden bg-white">
            <Report />
            <Pane title="Filters" className="ml-auto w-[49px] border-[#a19f9d] bg-white">
              <svg width="19" height="20" viewBox="0 0 19 20" fill="none" stroke="#252423" strokeWidth="1.600" className="ml-[5px] mt-[22px]"><path d="M17.500 1.500V18.500L10.500 12H1.500V8H10.500Z" /></svg>
              <i className="-mt-[10px]" />
            </Pane>
          </div>
          <PageTabs />
        </div>
        <Pane title="Visualizations" className="w-[52px] border-b border-b-[#dddbd9] border-l-[#dddbd9] bg-[#f3f2f1]" />
        <Pane title="Data" className="w-[52px] border-b border-b-[#dddbd9] border-l-[#dddbd9] bg-[#f3f2f1]" />
      </div>
      <StatusBar />
      <div className="mt-auto"><Taskbar /></div>
    </div>
  );
}
